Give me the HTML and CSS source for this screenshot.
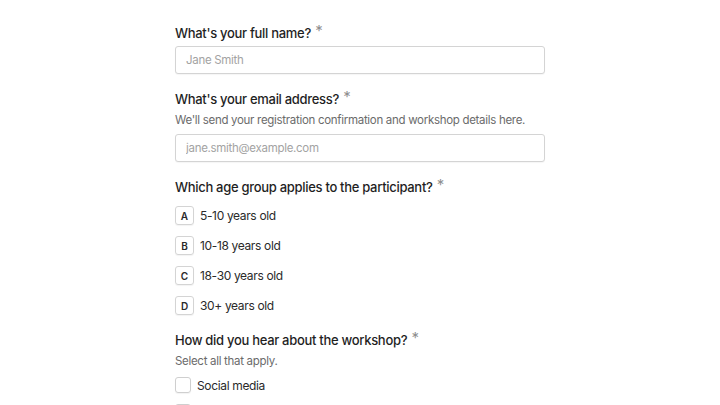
FILE: index.html
```html
<!DOCTYPE html>
<html lang="en">
<head>
<meta charset="utf-8">
<link rel="stylesheet" href="styles.css">
</head>
<body>
<form class="form">
  <div class="field">
    <label class="label">What's your full name? <span class="req">*</span></label>
    <input class="input" type="text" placeholder="Jane Smith">
  </div>
  <div class="field">
    <label class="label">What's your email address? <span class="req">*</span></label>
    <p class="help">We'll send your registration confirmation and workshop details here.</p>
    <input class="input" type="text" placeholder="jane.smith@example.com">
  </div>
  <div class="field">
    <label class="label">Which age group applies to the participant? <span class="req">*</span></label>
    <div class="choices">
      <div class="choice"><span class="key">A</span><span>5-10 years old</span></div>
      <div class="choice"><span class="key">B</span><span>10-18 years old</span></div>
      <div class="choice"><span class="key">C</span><span>18-30 years old</span></div>
      <div class="choice"><span class="key">D</span><span>30+ years old</span></div>
    </div>
  </div>
  <div class="field">
    <label class="label">How did you hear about the workshop? <span class="req">*</span></label>
    <p class="help">Select all that apply.</p>
    <div class="checks">
      <div class="check"><span class="box"></span><span>Social media</span></div>
      <div class="check"><span class="box"></span></div>
    </div>
  </div>
</form>
</body>
</html>
```
FILE: styles.css
```css
html, body {
  margin: 0;
  padding: 0;
  background: #ffffff;
}
body {
  font-family: Inter, "Noto Sans", sans-serif;
  color: #1f1f1f;
}
.form {
  width: 370px;
  margin: 0 auto;
  padding-top: 24px;
  display: flex;
  flex-direction: column;
  gap: 16px;
}
.field {
  display: flex;
  flex-direction: column;
}
.label {
  font-size: 13px;
  font-weight: 500;
  letter-spacing: -0.3px;
  line-height: 18px;
  color: #1f1f1f;
}
.req {
  color: #8f8f8f;
  font-size: 15px;
  font-weight: 400;
  line-height: 0;
  vertical-align: 2px;
  margin-left: 1px;
}
.help {
  margin: 4px 0 2px;
  font-size: 11.5px;
  letter-spacing: -0.3px;
  line-height: 16px;
  color: #6b6b6b;
}
.input {
  box-sizing: border-box;
  width: 370px;
  height: 28px;
  margin: 4px 0 0;
  padding: 0 10px;
  border: 1px solid #d4d4d4;
  border-radius: 3px;
  font-family: inherit;
  font-size: 11.5px;
  letter-spacing: -0.3px;
  color: #1f1f1f;
  background: #fff;
  box-shadow: 0 1px 1px rgba(0,0,0,0.04);
  outline: none;
}
.input::placeholder {
  color: #a3a3a3;
}
.choices {
  display: flex;
  flex-direction: column;
  gap: 11px;
  margin-top: 10px;
}
.choice {
  display: flex;
  align-items: center;
  gap: 6px;
  height: 19px;
  font-size: 12px;
  letter-spacing: -0.35px;
  color: #2a2a2a;
}
.key {
  box-sizing: border-box;
  width: 19px;
  height: 19px;
  border: 1px solid #d4d4d4;
  border-radius: 3px;
  display: flex;
  align-items: center;
  justify-content: center;
  font-size: 10px;
  font-weight: 600;
  letter-spacing: 0;
  color: #2a2a2a;
  box-shadow: 0 1px 1px rgba(0,0,0,0.05);
}
.checks {
  display: flex;
  flex-direction: column;
  gap: 11px;
  margin-top: 6px;
}
.check {
  display: flex;
  align-items: center;
  gap: 6px;
  height: 16px;
  font-size: 12px;
  letter-spacing: -0.35px;
  color: #2a2a2a;
}
.box {
  box-sizing: border-box;
  width: 16px;
  height: 16px;
  border: 1px solid #cfcfcf;
  border-radius: 3px;
  box-shadow: 0 1px 1px rgba(0,0,0,0.05);
}
```
